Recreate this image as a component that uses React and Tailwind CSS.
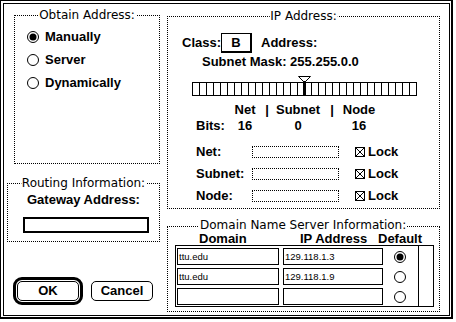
import React from "react";

const BOLD = "font-['Liberation_Sans',Arial,sans-serif] font-bold text-[13px] leading-[14px] text-black";
const TITLE = "font-['DejaVu_Sans',Verdana,sans-serif] text-[12px] leading-[12px] text-black";
const SMALL = "font-['Liberation_Sans',Arial,sans-serif] text-[9.5px] leading-[14px] text-black";

function Group({ title, className, titleClass, children }) {
  return (
    <div className={`relative border border-dotted border-black ${className}`}>
      <span className={`absolute bg-white px-[1px] whitespace-nowrap ${TITLE} ${titleClass}`}>{title}</span>
      {children}
    </div>
  );
}

function Radio({ on }) {
  return (
    <svg width="12" height="12" viewBox="0 0 12 12" className="shrink-0 block">
      <circle cx="6" cy="6" r="5.5" fill="white" stroke="black" strokeWidth="1" />
      {on && <circle cx="6" cy="6" r="3.5" fill="black" />}
    </svg>
  );
}

function Check() {
  return (
    <svg width="10" height="10" viewBox="0 0 10 10" className="shrink-0 block">
      <rect x="0.5" y="0.5" width="9" height="9" fill="white" stroke="black" />
      <path d="M1 1L9 9M9 1L1 9" stroke="black" strokeWidth="1" />
    </svg>
  );
}

function RadioRow({ on, label, className }) {
  return (
    <div className={`flex items-center h-[14px] pl-[12px] ${className}`}>
      <Radio on={on} />
      <span className={`ml-[6px] ${BOLD}`}>{label}</span>
    </div>
  );
}

function LockRow({ label, className }) {
  return (
    <div className={`flex items-center h-[16px] pl-[28px] ${className}`}>
      <span className={`w-[56px] ${BOLD}`}>{label}</span>
      <div className="w-[87px] h-[12px] border border-dotted border-black" />
      <div className="ml-[16px]"><Check /></div>
      <span className={`ml-[3px] ${BOLD}`}>Lock</span>
    </div>
  );
}

function DnsRow({ domain, ip, on }) {
  return (
    <div className="flex items-center h-[17px]">
      <div className={`w-[102px] h-[17px] border border-black flex items-center pl-[1px] ${SMALL}`}>{domain}</div>
      <div className={`ml-[4px] w-[100px] h-[17px] border border-black flex items-center pl-[1px] ${SMALL}`}>{ip}</div>
      <div className="ml-[11px]"><Radio on={on} /></div>
    </div>
  );
}

const cells = Array.from({ length: 32 }, (_, i) => i);

export default function App() {
  return (
    <div className="w-[456px] h-[322px] bg-white">
      <div className="w-[453px] h-[319px] border-l border-t border-r-2 border-b-2 border-black pl-[2px] pt-[2px] pr-[1px] pb-[1px] flex">
        <div className="flex-1 border border-black flex pl-[3px]">
          {/* Left column */}
          <div className="w-[153px] flex flex-col">
            <Group title="Obtain Address:" className="ml-[7px] mt-[11px] w-[146px] h-[149px]" titleClass="top-[-7px] left-1/2 -translate-x-1/2">
              <RadioRow on label="Manually" className="mt-[14px]" />
              <RadioRow label="Server" className="mt-[9px]" />
              <RadioRow label="Dynamically" className="mt-[9px]" />
            </Group>
            <Group title="Routing Information:" className="mt-[19px] w-[153px] h-[59px]" titleClass="top-[-7px] left-1/2 -translate-x-1/2">
              <div className={`mt-[9px] h-[14px] pl-[19px] ${BOLD}`}>Gateway Address:</div>
              <div className="mt-[10px] ml-[15px] w-[126px] h-[16px] border-2 border-black" />
            </Group>
            <div className="mt-[35px] ml-[6px] flex items-start">
              <div className="w-[70px] h-[28px] border-[3px] border-black rounded-[9px] p-[1px]">
                <div className={`w-full h-full border border-black rounded-[5px] flex items-center justify-center ${BOLD}`}>OK</div>
              </div>
              <div className={`ml-[8px] mt-[4px] w-[62px] h-[20px] border border-black rounded-[5px] flex items-center justify-center ${BOLD}`}>Cancel</div>
            </div>
          </div>

          {/* Right column */}
          <div className="ml-[7px] w-[273px] flex flex-col">
            <Group title="IP Address:" className="mt-[12px] w-[273px] h-[193px]" titleClass="top-[-7px] left-1/2 -translate-x-1/2">
              <div className="mt-[16px] h-[20px] flex items-center pl-[14px]">
                <span className={`w-[39px] ${BOLD}`}>Class:</span>
                <div className={`w-[31px] h-[20px] border-l border-t border-r-2 border-b-2 border-black flex items-center justify-center ${BOLD}`}>B</div>
                <span className={`ml-[9px] ${BOLD}`}>Address:</span>
              </div>
              <div className={`mt-[2px] h-[14px] pl-[34px] ${BOLD}`}>Subnet Mask: 255.255.0.0</div>
              <div className="mt-[7px] ml-[24px] relative h-[20px] w-[225px]">
                <div className="absolute top-0 left-0 w-[225px] pt-[6px] flex">
                  {cells.map((i) => (
                    <div key={i} className={`w-[7px] h-[14px] border-y border-l border-black ${i === 31 ? "border-r w-[8px]" : ""}`} />
                  ))}
                </div>
                <svg width="13" height="20" viewBox="0 0 13 20" className="absolute top-0 left-[106px]">
                  <polygon points="0.5,0.5 12.5,0.5 7.5,5.5 5.5,5.5" fill="white" stroke="black" strokeWidth="1" />
                  <rect x="5" y="5" width="3" height="15" fill="black" />
                </svg>
              </div>
              <div className={`mt-[7px] h-[13px] pl-[57px] flex ${BOLD}`}>
                <span className="w-[40px] text-center">Net</span>
                <span className="w-[4px] text-center">|</span>
                <span className="w-[58px] text-center">Subnet</span>
                <span className="w-[10px] text-center">|</span>
                <span className="w-[44px] text-center">Node</span>
              </div>
              <div className={`mt-[3px] h-[13px] pl-[28px] flex ${BOLD}`}>
                <span className="w-[29px]">Bits:</span>
                <span className="w-[40px] text-center">16</span>
                <span className="w-[4px]" />
                <span className="w-[58px] text-center">0</span>
                <span className="w-[10px]" />
                <span className="w-[44px] text-center">16</span>
              </div>
              <LockRow label="Net:" className="mt-[12px]" />
              <LockRow label="Subnet:" className="mt-[6px]" />
              <LockRow label="Node:" className="mt-[6px]" />
            </Group>

            <Group title="Domain Name Server Information:" className="mt-[17px] w-[273px] h-[86px]" titleClass="top-[-8px] left-[31px]">
              <div className="mt-[6px] h-[12px] pl-[31px] flex font-['Liberation_Sans',Arial,sans-serif] font-bold text-[13px] leading-[12px] text-black">
                <span className="w-[101px]">Domain</span>
                <span className="w-[78px]">IP Address</span>
                <span>Default</span>
              </div>
              <div className="ml-[7px] w-[259px] h-[62px] border border-black flex">
                <div className="w-[242px] flex flex-col gap-[3px] pt-[2px] pl-[1px]">
                  <DnsRow domain="ttu.edu" ip="129.118.1.3" on />
                  <DnsRow domain="ttu.edu" ip="129.118.1.9" />
                  <DnsRow domain="" ip="" />
                </div>
                <div className="w-[15px] border-l border-black" />
              </div>
            </Group>
          </div>
        </div>
      </div>
    </div>
  );
}
